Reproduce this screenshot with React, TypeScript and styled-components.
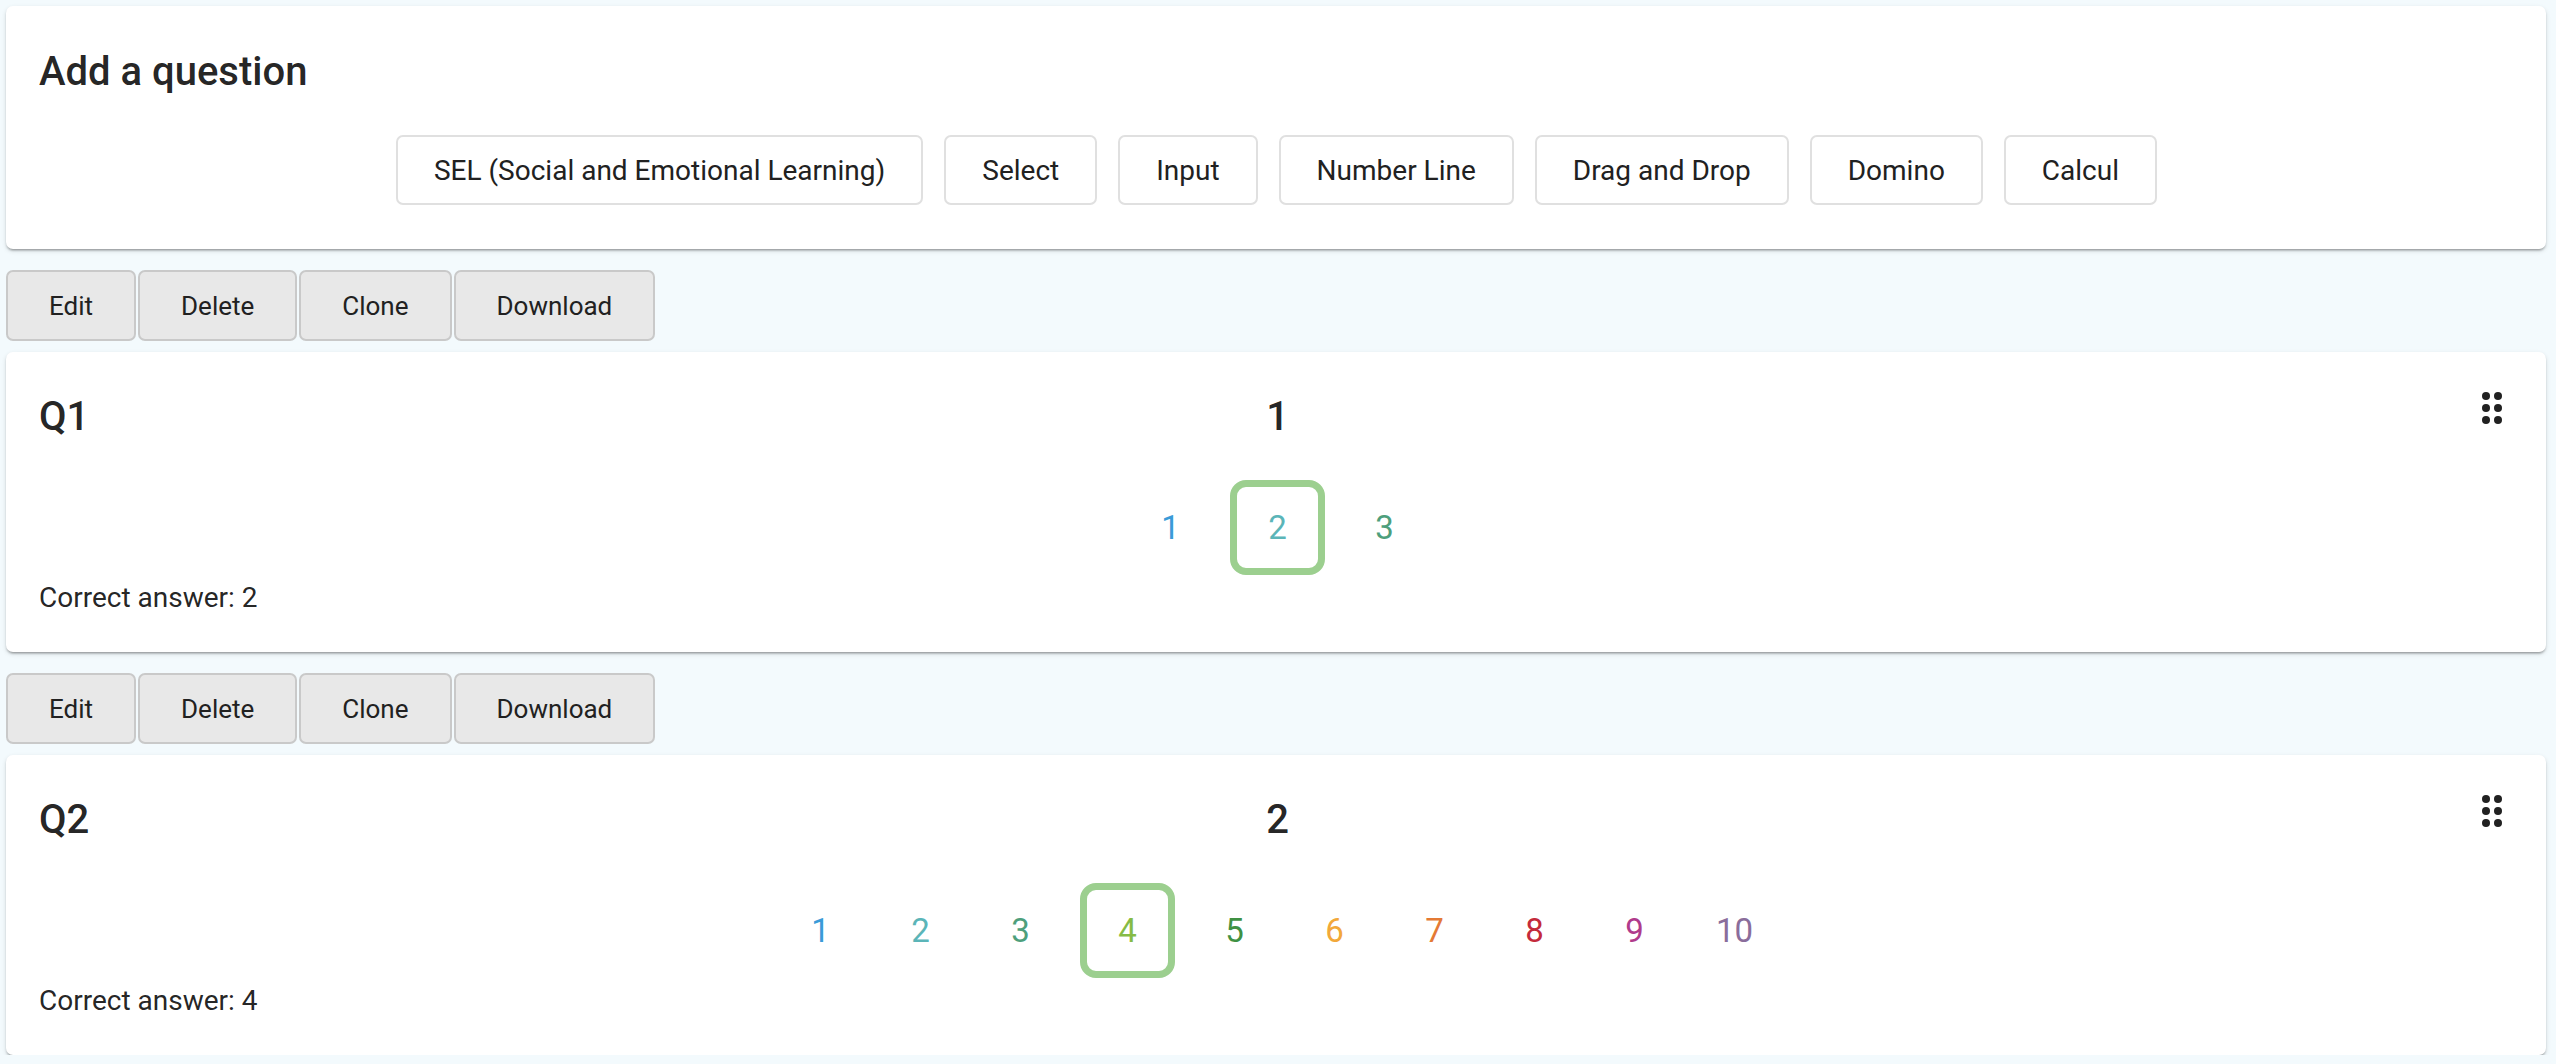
import React from "react";
import styled, { createGlobalStyle } from "styled-components";

const GlobalStyle = createGlobalStyle`
  html, body {
    margin: 0;
    padding: 0;
    background-color: #f3fafd;
    font-family: Roboto, "Noto Sans", "Liberation Sans", sans-serif;
    color: rgba(0, 0, 0, 0.87);
  }
`;

const questionTypes = [
  "SEL (Social and Emotional Learning)",
  "Select",
  "Input",
  "Number Line",
  "Drag and Drop",
  "Domino",
  "Calcul",
];

const optionColors = [
  "#3a9bd8",
  "#5bb5b8",
  "#4e9f7c",
  "#86bb45",
  "#3f9143",
  "#f2a83a",
  "#e47a35",
  "#c42a3b",
  "#b03b8c",
  "#8a6d9b",
];

const questions = [
  { id: "Q1", title: "1", count: 3, answer: 2 },
  { id: "Q2", title: "2", count: 10, answer: 4 },
];

const DragIcon = () => (
  <svg width="48" height="48" viewBox="0 0 24 24" fill="#212121">
    <circle cx="9" cy="6" r="2" />
    <circle cx="15" cy="6" r="2" />
    <circle cx="9" cy="12" r="2" />
    <circle cx="15" cy="12" r="2" />
    <circle cx="9" cy="18" r="2" />
    <circle cx="15" cy="18" r="2" />
  </svg>
);

const App = () => {
  return (
    <>
      <GlobalStyle />
      <Page>
        <Card>
          <AddTitle>Add a question</AddTitle>
          <TypeRow>
            {questionTypes.map((t) => (
              <TypeButton key={t}>{t}</TypeButton>
            ))}
          </TypeRow>
        </Card>

        {questions.map((q) => (
          <React.Fragment key={q.id}>
            <ActionRow>
              <ActionButton>Edit</ActionButton>
              <ActionButton>Delete</ActionButton>
              <ActionButton>Clone</ActionButton>
              <ActionButton>Download</ActionButton>
            </ActionRow>
            <QuestionCard>
              <Header>
                <HeaderText>{q.id}</HeaderText>
                <HeaderText>{q.title}</HeaderText>
                <Handle>
                  <DragIcon />
                </Handle>
              </Header>
              <Options>
                {Array.from({ length: q.count }, (_, i) => (
                  <Option
                    key={i}
                    $color={optionColors[i]}
                    $selected={i + 1 === q.answer}
                  >
                    {i + 1}
                  </Option>
                ))}
              </Options>
              <Answer>Correct answer: {q.answer}</Answer>
            </QuestionCard>
          </React.Fragment>
        ))}
      </Page>
    </>
  );
};

export default App;

const Page = styled.div`
  display: flex;
  flex-direction: column;
  padding: 6px 10px 0 6px;
`;

const Card = styled.div`
  background-color: #fff;
  border-radius: 7px;
  box-shadow: 0px 3px 2px -2px rgba(0, 0, 0, 0.2),
    0px 2px 2px 0px rgba(0, 0, 0, 0.14), 0px 2px 5px 0px rgba(0, 0, 0, 0.12);
  padding: 42px 32px 44px 33px;
  display: flex;
  flex-direction: column;
`;

const AddTitle = styled.div`
  font-size: 40px;
  font-weight: 500;
  line-height: 47px;
  height: 47px;
`;

const TypeRow = styled.div`
  display: flex;
  justify-content: center;
  gap: 21px;
  margin-top: 40px;
`;

const TypeButton = styled.button`
  height: 70px;
  padding: 0 36px;
  background-color: #fff;
  border: 2px solid #e0e0e0;
  border-radius: 7px;
  font-family: Roboto, "Noto Sans", sans-serif;
  font-size: 28px;
  color: #212121;
`;

const ActionRow = styled.div`
  display: flex;
  gap: 2px;
  margin-top: 21px;
  margin-bottom: 11px;
`;

const ActionButton = styled.button`
  height: 71px;
  padding: 0 41px;
  background-color: #e8e8e8;
  border: 2px solid #c9c9c9;
  border-radius: 7px;
  font-family: Roboto, "Noto Sans", sans-serif;
  font-size: 26px;
  color: #212121;
`;

const QuestionCard = styled(Card)`
  padding: 26px 30px 35px 33px;
`;

const Header = styled.div`
  display: grid;
  grid-template-columns: 1fr auto 1fr;
  align-items: center;
  height: 76px;
`;

const HeaderText = styled.div`
  font-size: 40px;
  font-weight: 500;
  line-height: 47px;
`;

const Handle = styled.div`
  justify-self: end;
  align-self: start;
  height: 48px;
  margin-top: 6px;
`;

const Options = styled.div`
  display: flex;
  justify-content: center;
  align-items: center;
  gap: 19px;
  height: 95px;
  margin-top: 26px;
`;

const Option = styled.div<{ $color: string; $selected: boolean }>`
  box-sizing: border-box;
  display: flex;
  align-items: center;
  justify-content: center;
  width: ${(p) => (p.$selected ? "95px" : "81px")};
  height: ${(p) => (p.$selected ? "95px" : "81px")};
  border: ${(p) => (p.$selected ? "7px solid #9ccf8f" : "none")};
  border-radius: 16px;
  font-size: 33px;
  color: ${(p) => p.$color};
`;

const Answer = styled.div`
  margin-top: 3px;
  font-size: 28px;
  line-height: 39px;
`;
